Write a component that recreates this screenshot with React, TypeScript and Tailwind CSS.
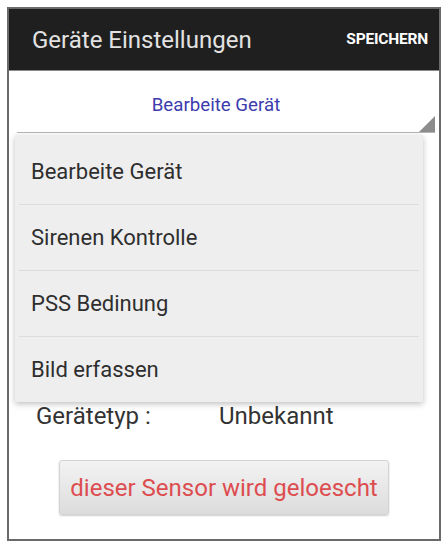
import React from "react";

const menuItems = ["Bearbeite Gerät", "Sirenen Kontrolle", "PSS Bedinung", "Bild erfassen"];

export default function App() {
  return (
    <div
      className="w-[446px] h-[542px] bg-white pl-[7px] pt-[7px]"
      style={{ fontFamily: "Roboto, 'Noto Sans', Arial, sans-serif" }}
    >
      <div className="relative flex h-[534px] w-[434px] flex-col border-2 border-[#6a6a6a] bg-white">
        {/* action bar */}
        <div className="flex h-[62px] items-center justify-between border-b border-[#8a8a8a] bg-[#1f1f1f] pl-[23px] pr-[11px]">
          <span className="text-[24px] leading-none text-[#e2e2e2]">Geräte Einstellungen</span>
          <span className="text-[15.5px] font-bold leading-none tracking-[-0.2px] text-white">SPEICHERN</span>
        </div>

        {/* spinner */}
        <div className="relative ml-[8px] mr-[4px] h-[62px] border-b border-[#b5b5b5]">
          <div className="pr-[20px] pt-[24px] text-center text-[18.7px] leading-[21px] text-[#3c3cae]">
            Bearbeite Gerät
          </div>
          <svg className="absolute bottom-0 right-[0px]" width="16" height="16" viewBox="0 0 16 16">
            <polygon points="16,0 16,16 0,16" fill="#8c8c8c" />
          </svg>
        </div>

        {/* device type */}
        <div className="mt-[269px] flex pl-[27px] text-[24px] leading-[28px] text-[#333]">
          <span className="w-[183px]">Gerätetyp :</span>
          <span>Unbekannt</span>
        </div>

        {/* delete button */}
        <div className="ml-[50px] mt-[30px]">
          <button className="flex h-[55px] w-[330px] items-center justify-center rounded-[3px] border border-[#d3d3d3] bg-gradient-to-b from-[#f3f3f3] to-[#dcdcdc] text-[24px] text-[#dd4d50] shadow-[0_1px_2px_rgba(0,0,0,0.2)]">
            dieser Sensor wird geloescht
          </button>
        </div>

        {/* open dropdown list */}
        <div className="absolute left-[6px] top-[126px] w-[408px] bg-[#eeeeee] pt-[4px] shadow-[0_2px_6px_rgba(0,0,0,0.25)]">
          {menuItems.map((item, i) => (
            <div key={item}>
              {i > 0 && <div className="mx-[4px] h-px bg-[#dcdcdc]" />}
              <div className="flex h-[65px] items-center pl-[16px] text-[22px] text-[#2e2e2e]">{item}</div>
            </div>
          ))}
        </div>
      </div>
    </div>
  );
}
